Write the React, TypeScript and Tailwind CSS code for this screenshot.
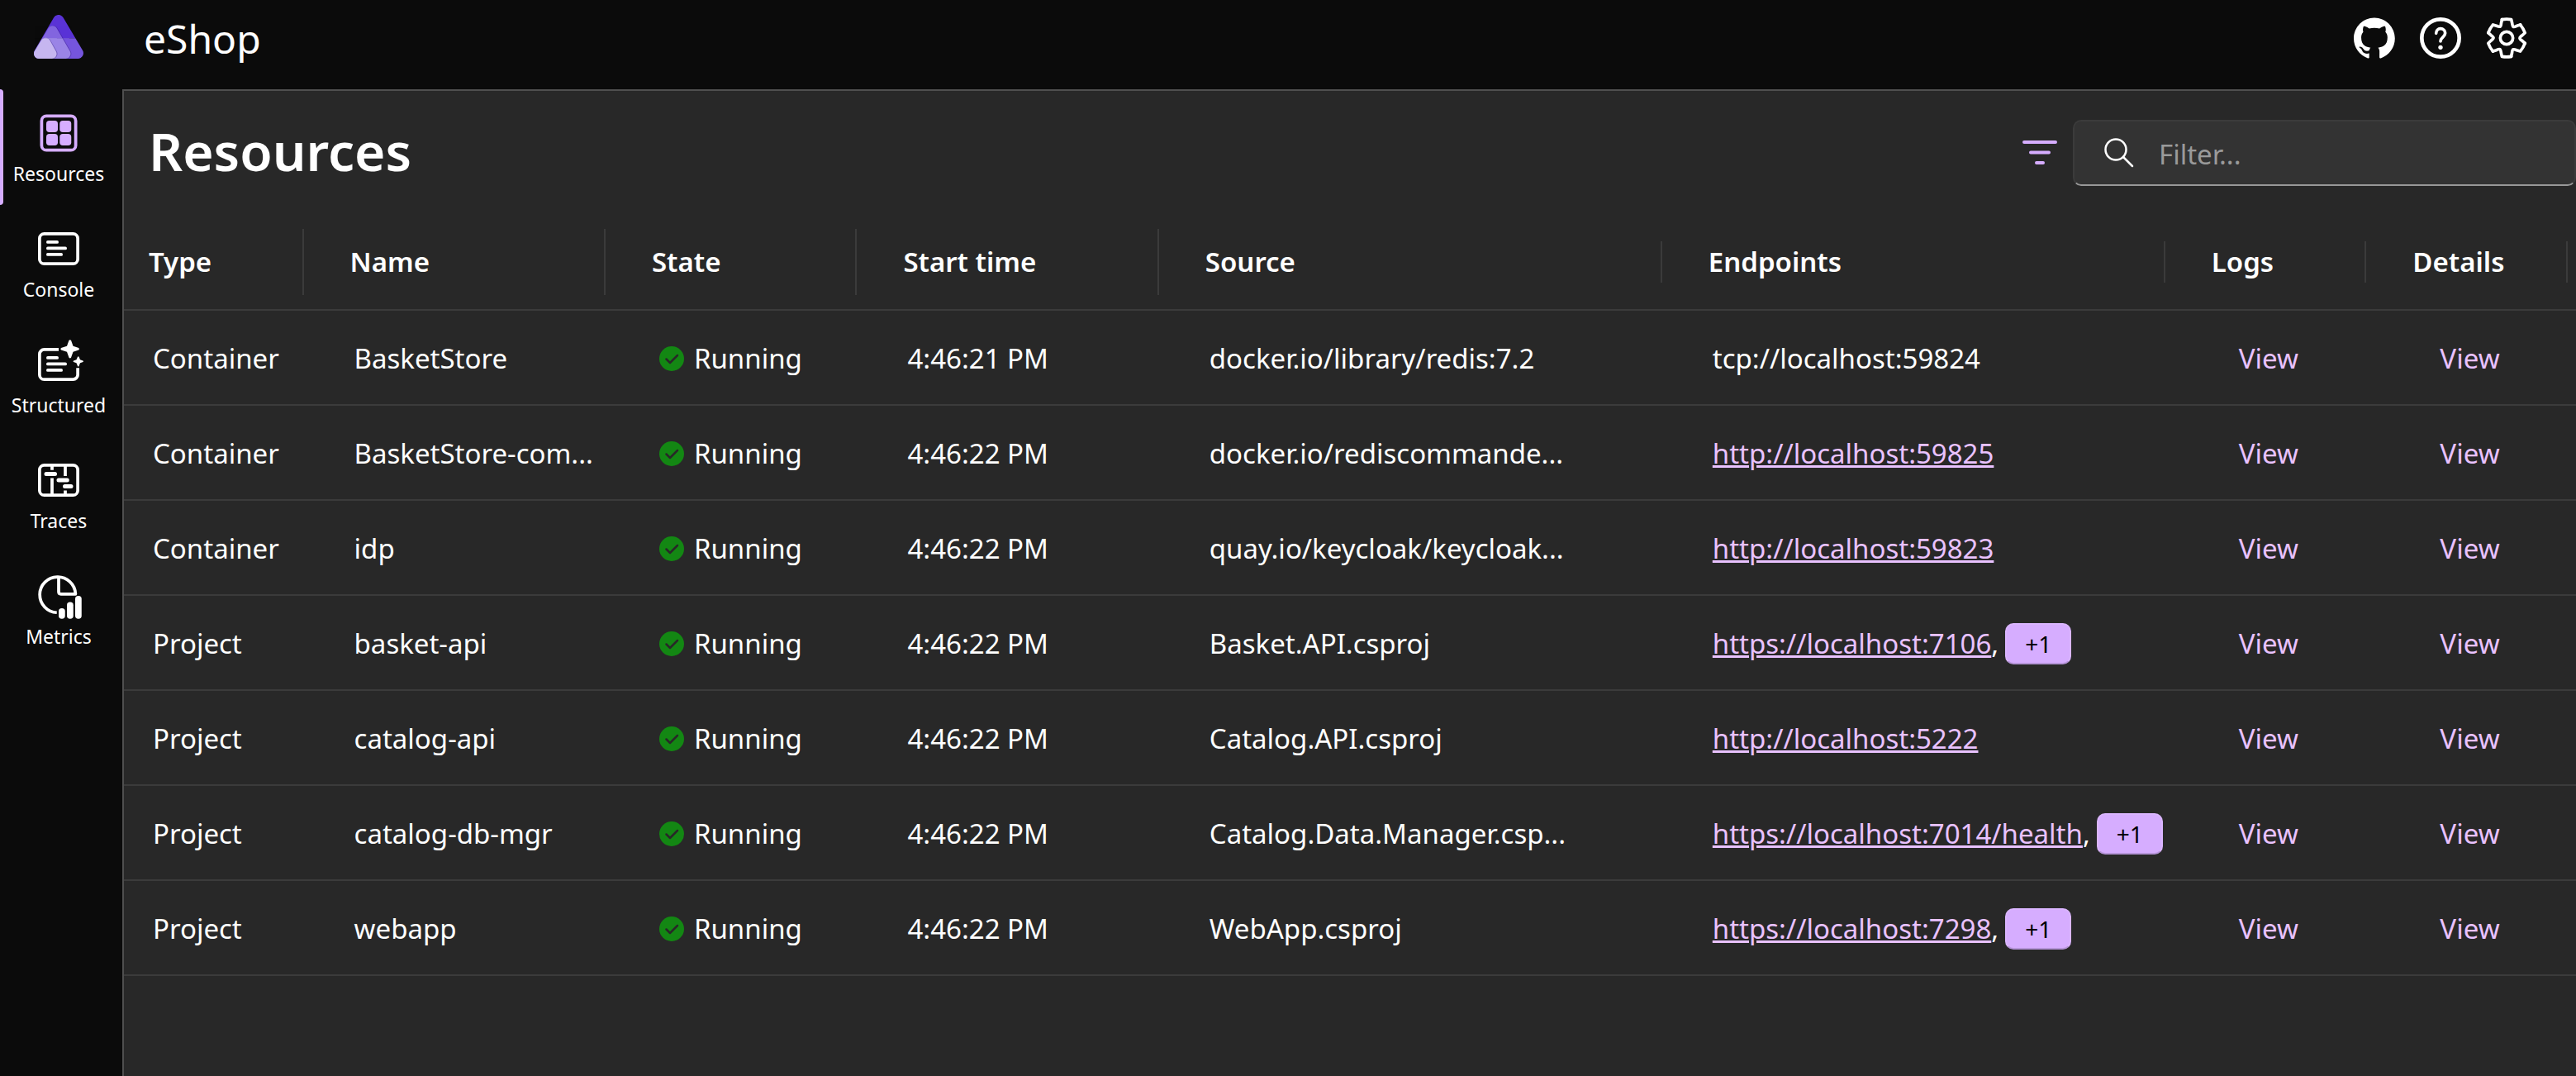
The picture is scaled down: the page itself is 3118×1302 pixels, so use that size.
import React from "react";

type Resource = {
  type: string;
  name: string;
  time: string;
  source: string;
  endpoint: string;
  linked: boolean;
  more?: string;
};

const resources: Resource[] = [
  { type: "Container", name: "BasketStore", time: "4:46:21 PM", source: "docker.io/library/redis:7.2", endpoint: "tcp://localhost:59824", linked: false },
  { type: "Container", name: "BasketStore-com...", time: "4:46:22 PM", source: "docker.io/rediscommande...", endpoint: "http://localhost:59825", linked: true },
  { type: "Container", name: "idp", time: "4:46:22 PM", source: "quay.io/keycloak/keycloak...", endpoint: "http://localhost:59823", linked: true },
  { type: "Project", name: "basket-api", time: "4:46:22 PM", source: "Basket.API.csproj", endpoint: "https://localhost:7106", linked: true, more: "+1" },
  { type: "Project", name: "catalog-api", time: "4:46:22 PM", source: "Catalog.API.csproj", endpoint: "http://localhost:5222", linked: true },
  { type: "Project", name: "catalog-db-mgr", time: "4:46:22 PM", source: "Catalog.Data.Manager.csp...", endpoint: "https://localhost:7014/health", linked: true, more: "+1" },
  { type: "Project", name: "webapp", time: "4:46:22 PM", source: "WebApp.csproj", endpoint: "https://localhost:7298", linked: true, more: "+1" },
];

const columns = [
  { label: "Type", share: 2, sortable: true },
  { label: "Name", share: 3, sortable: true },
  { label: "State", share: 2.5, sortable: true },
  { label: "Start time", share: 3, sortable: true },
  { label: "Source", share: 5, sortable: false },
  { label: "Endpoints", share: 5, sortable: false },
  { label: "Logs", share: 2, sortable: false },
  { label: "Details", share: 2, sortable: false },
];
const totalShare = columns.reduce((sum, c) => sum + c.share, 0);

function Logo() {
  const shapes = (big: string, mid: string, small: string) => (
    <>
      <path d="M90 20L161 140H20Z" fill={big} stroke={big} strokeWidth="40" />
      <path d="M71 58L119 142H21Z" fill="#2a1470" stroke="#2a1470" strokeWidth="36" opacity="0.35" />
      <path d="M68 58L116 142H18Z" fill={mid} stroke={mid} strokeWidth="36" />
      <path d="M46 103L68 142H21Z" fill="#2a1470" stroke="#2a1470" strokeWidth="36" opacity="0.35" />
      <path d="M43 102L65 142H18Z" fill={small} stroke={small} strokeWidth="36" />
    </>
  );
  return (
    <svg viewBox="0 0 181 160" className="h-[53px] w-[60px]" strokeLinejoin="round" aria-hidden="true">
      <defs>
        <clipPath id="logo-top"><rect width="181" height="85" /></clipPath>
        <clipPath id="logo-bottom"><rect y="85" width="181" height="75" /></clipPath>
      </defs>
      <g clipPath="url(#logo-top)">{shapes("#5a33d6", "#8265df", "#c6b6f0")}</g>
      <g clipPath="url(#logo-bottom)">{shapes("#7555dd", "#9a84e6", "#c6b6f0")}</g>
    </svg>
  );
}

function NavSvg({ children }: { children: React.ReactNode }) {
  return (
    <svg viewBox="0 0 20 20" className="size-[50px] overflow-visible" fill="none" stroke="currentColor" strokeWidth="1.5" strokeLinecap="round" aria-hidden="true">
      {children}
    </svg>
  );
}

function ResourcesIcon() {
  return (
    <NavSvg>
      <rect x="1.75" y="1.75" width="16.5" height="16.5" rx="2.3" />
      <g fill="currentColor" stroke="none">
        <rect x="4" y="4" width="5.6" height="5.6" rx="1.5" />
        <rect x="10.5" y="4" width="5.6" height="5.6" rx="1.5" />
        <rect x="4" y="10.4" width="5.6" height="5.6" rx="1.5" />
        <rect x="10.5" y="10.4" width="5.6" height="5.6" rx="1.5" />
      </g>
    </NavSvg>
  );
}

function ConsoleIcon() {
  return (
    <NavSvg>
      <rect x="0.75" y="2.75" width="18.5" height="14.5" rx="2.3" />
      <path d="M4.75 6.75H9.25M4.75 9.75H13.25M4.75 12.75H11.25" />
    </NavSvg>
  );
}

function StructuredIcon() {
  return (
    <NavSvg>
      <path strokeLinecap="butt" d="M10 2.75H3.05A2.3 2.3 0 0 0 .75 5.05V14.95A2.3 2.3 0 0 0 3.05 17.25H16.95A2.3 2.3 0 0 0 19.25 14.95V11.7" />
      <path d="M4.75 6.75H9.25M4.75 9.75H13.25M4.75 12.75H11.25" />
      <g fill="currentColor" stroke="none">
        <path d="M15 -1.7Q15.5 -2.2 16 -1.7L17 1.1 19.7 2Q20.3 2.5 19.7 3L17 3.9 16 6.7Q15.5 7.2 15 6.7L14 3.9 11.2 3Q10.6 2.5 11.2 2L14 1.1Z" />
        <path d="M19.2 6.3Q19.5 5.9 19.8 6.3L20.4 7.7 21.8 8.2Q22.2 8.5 21.8 8.8L20.4 9.3 19.8 10.8Q19.5 11.2 19.2 10.8L18.6 9.3 17.2 8.8Q16.8 8.5 17.2 8.2L18.6 7.7Z" />
      </g>
    </NavSvg>
  );
}

function TracesIcon() {
  return (
    <NavSvg>
      <rect x="0.75" y="2.75" width="18.5" height="14.5" rx="2.3" />
      <path strokeLinecap="butt" d="M6.8 3V5.1M6.8 9V17.3M13.2 3V8M13.2 15V17.3" />
      <path strokeWidth="2" d="M4 7H8.2M10 10H14.1M13 13H16" />
    </NavSvg>
  );
}

function MetricsIcon() {
  return (
    <NavSvg>
      <path strokeLinecap="butt" d="M9.1 18.1A8.65 8.65 0 1 1 18.15 9" />
      <path strokeLinejoin="round" d="M10 1V8Q10 9.1 11.1 9.1H18.15" />
      <g fill="currentColor" stroke="none">
        <rect x="10" y="16" width="3.1" height="5.1" rx="1.5" />
        <rect x="14" y="13" width="3.1" height="8.1" rx="1.5" />
        <rect x="18" y="10" width="3.1" height="11.1" rx="1.5" />
      </g>
    </NavSvg>
  );
}

function GitHubIcon() {
  return (
    <svg viewBox="0 0 98 96" className="size-[50px] overflow-visible" fill="currentColor" aria-hidden="true">
      <path
        fillRule="evenodd"
        clipRule="evenodd"
        d="M48.854 0C21.839 0 0 22 0 49.217c0 21.756 13.993 40.172 33.405 46.69 2.427.49 3.316-1.059 3.316-2.362 0-1.141-.08-5.052-.08-9.127-13.59 2.934-16.42-5.867-16.42-5.867-2.184-5.704-5.42-7.17-5.42-7.17-4.448-3.015.324-3.015.324-3.015 4.934.326 7.523 5.052 7.523 5.052 4.367 7.496 11.404 5.378 14.235 4.074.404-3.178 1.699-5.378 3.074-6.6-10.839-1.141-22.243-5.378-22.243-24.283 0-5.378 1.94-9.778 5.014-13.2-.485-1.222-2.184-6.275.486-13.038 0 0 4.125-1.304 13.426 5.052a46.97 46.97 0 0 1 12.214-1.63c4.125 0 8.33.571 12.213 1.63 9.302-6.356 13.427-5.052 13.427-5.052 2.67 6.763.97 11.816.485 13.038 3.155 3.422 5.015 7.822 5.015 13.2 0 18.905-11.404 23.06-22.324 24.283 1.78 1.548 3.316 4.481 3.316 9.126 0 6.6-.08 11.897-.08 13.526 0 1.304.89 2.853 3.316 2.364 19.412-6.52 33.405-24.935 33.405-46.691C97.707 22 75.788 0 48.854 0z"
      />
    </svg>
  );
}

function HelpIcon() {
  return (
    <svg viewBox="0 0 150 150" className="size-[50px]" fill="none" stroke="currentColor" strokeLinecap="round" aria-hidden="true">
      <circle cx="75" cy="75" r="68" strokeWidth="14" />
      <path d="M59 58C59 48 66 41 75 41C85 41 92 48 92 57C92 72 75 73 75 87" strokeWidth="11" />
      <circle cx="75" cy="109" r="8" fill="currentColor" stroke="none" />
    </svg>
  );
}

function SettingsIcon() {
  return (
    <svg viewBox="-75 -75 150 150" className="size-[50px]" fill="none" stroke="currentColor" strokeWidth="11" strokeLinejoin="round" strokeLinecap="round" aria-hidden="true">
      {[0, 60, 120, 180, 240, 300].map((angle) => (
        <path key={angle} transform={`rotate(${angle})`} d="M-17 -67Q0 -70 17 -67L20 -54C22 -39 24 -38 37 -44L50 -48" />
      ))}
      <circle r="23" />
    </svg>
  );
}

const navItems = [
  { label: "Resources", Icon: ResourcesIcon, active: true },
  { label: "Console", Icon: ConsoleIcon, active: false },
  { label: "Structured", Icon: StructuredIcon, active: false },
  { label: "Traces", Icon: TracesIcon, active: false },
  { label: "Metrics", Icon: MetricsIcon, active: false },
];

function Header() {
  return (
    <header className="flex h-[108px] items-center pb-4">
      <div className="flex w-[142px] justify-center pb-1">
        <Logo />
      </div>
      <span className="pl-8 pt-[2px] text-[48px] leading-none">eShop</span>
      <div className="ml-auto flex items-center gap-[30px] pr-[59px]">
        <a href="#github" aria-label="GitHub repository">
          <GitHubIcon />
        </a>
        <button type="button" aria-label="Help">
          <HelpIcon />
        </button>
        <button type="button" aria-label="Settings">
          <SettingsIcon />
        </button>
      </div>
    </header>
  );
}

function Sidebar() {
  return (
    <nav className="w-[148px] shrink-0">
      {navItems.map(({ label, Icon, active }) => (
        <a
          key={label}
          href={`#${label.toLowerCase()}`}
          aria-current={active ? "page" : undefined}
          className="relative flex h-[140px] flex-col items-center gap-2 pr-[6px] pt-7"
        >
          {active && <span className="absolute inset-y-0 left-0 w-1 rounded-r-sm bg-[#d6adff]" />}
          <span className={active ? "text-[#d6adff]" : "text-white"}>
            <Icon />
          </span>
          <span className="text-[23px] leading-8">{label}</span>
        </a>
      ))}
    </nav>
  );
}

function Toolbar() {
  return (
    <div className="flex h-[150px] items-center pl-[30px]">
      <h1 className="pb-1 text-[64px] font-semibold leading-none">Resources</h1>
      <div className="ml-auto flex items-center gap-4">
        <button type="button" aria-label="Filter types" className="text-[#d6adff]">
          <svg viewBox="0 0 50 50" className="size-[50px]" fill="none" stroke="currentColor" strokeWidth="4" strokeLinecap="round" aria-hidden="true">
            <path d="M7 12H45M15 24.5H37M22 37H30" />
          </svg>
        </button>
        <label className="flex h-20 w-[609px] items-center rounded-[10px] border-2 border-[#3b3b3b] border-b-[#989898] bg-[#333333] pl-[34px]">
          <svg viewBox="0 0 40 40" className="size-10 shrink-0" fill="none" stroke="currentColor" strokeWidth="2.5" strokeLinecap="round" aria-hidden="true">
            <circle cx="16" cy="16" r="12.5" />
            <path d="M25 25L36 36" />
          </svg>
          <input
            type="search"
            aria-label="Filter resources"
            placeholder="Filter..."
            className="ml-7 mt-1 min-w-0 flex-1 bg-transparent text-[33px] outline-none placeholder:text-[#9a9a9a]"
          />
        </label>
      </div>
    </div>
  );
}

function ResourceTable() {
  return (
    <table className="w-[calc(100%+16px)] table-fixed text-left text-[33px] leading-10">
      <colgroup>
        {columns.map((c) => (
          <col key={c.label} style={{ width: `${(100 * c.share) / totalShare}%` }} />
        ))}
      </colgroup>
      <thead>
        <tr className="h-[115px] border-b-2 border-[#3b3b3b]">
          {columns.map((c) => (
            <th key={c.label} scope="col" className="p-0 pl-[30px] font-semibold">
              <div className="flex items-center justify-between pr-[26px]">
                <span>{c.label}</span>
                <span className={c.sortable ? "h-20 w-[2px] bg-[#3b3b3b]" : "h-[50px] w-[2px] bg-[#3b3b3b]"} />
              </div>
            </th>
          ))}
        </tr>
      </thead>
      <tbody>
        {resources.map((r) => (
          <tr key={r.name} className="h-[115px] whitespace-nowrap border-b-2 border-[#3b3b3b] [&>td]:p-0 [&>td]:pl-[35px] [&>td]:pt-[2px]">
            <td>{r.type}</td>
            <td>{r.name}</td>
            <td>
              <div className="flex items-center gap-3 pl-1">
                <svg viewBox="0 0 30 30" className="size-[30px]" aria-hidden="true">
                  <circle cx="15" cy="15" r="15" fill="#138713" />
                  <path d="M8.5 15.5L13 20L22 11" fill="none" stroke="#282828" strokeWidth="2.5" strokeLinecap="round" strokeLinejoin="round" />
                </svg>
                <span>Running</span>
              </div>
            </td>
            <td>{r.time}</td>
            <td>{r.source}</td>
            <td>
              <div className="flex items-center">
                {r.linked ? (
                  <a href={r.endpoint} className="text-[#e9c2ff] underline decoration-[3px] underline-offset-2">{r.endpoint}</a>
                ) : (
                  <span>{r.endpoint}</span>
                )}
                {r.more && (
                  <>
                    <span>,</span>
                    <button type="button" className="ml-2 h-[50px] w-20 rounded-[10px] border-2 border-[#dab5ff] border-b-[#b594d8] bg-[#d6adff] text-[28px] leading-none text-black">
                      {r.more}
                    </button>
                  </>
                )}
              </div>
            </td>
            <td>
              <a href="#logs" className="pl-7 text-[#e9c2ff]">View</a>
            </td>
            <td>
              <a href="#details" className="pl-7 text-[#e9c2ff]">View</a>
            </td>
          </tr>
        ))}
      </tbody>
    </table>
  );
}

export default function App() {
  return (
    <div className="flex min-h-screen flex-col bg-[#0b0b0b] font-['Noto_Sans','Open_Sans',sans-serif] text-white">
      <Header />
      <div className="flex flex-1">
        <Sidebar />
        <main className="min-w-0 flex-1 overflow-hidden border-l-2 border-t-2 border-[#4f4f4f] bg-[#282828]">
          <Toolbar />
          <ResourceTable />
        </main>
      </div>
    </div>
  );
}
